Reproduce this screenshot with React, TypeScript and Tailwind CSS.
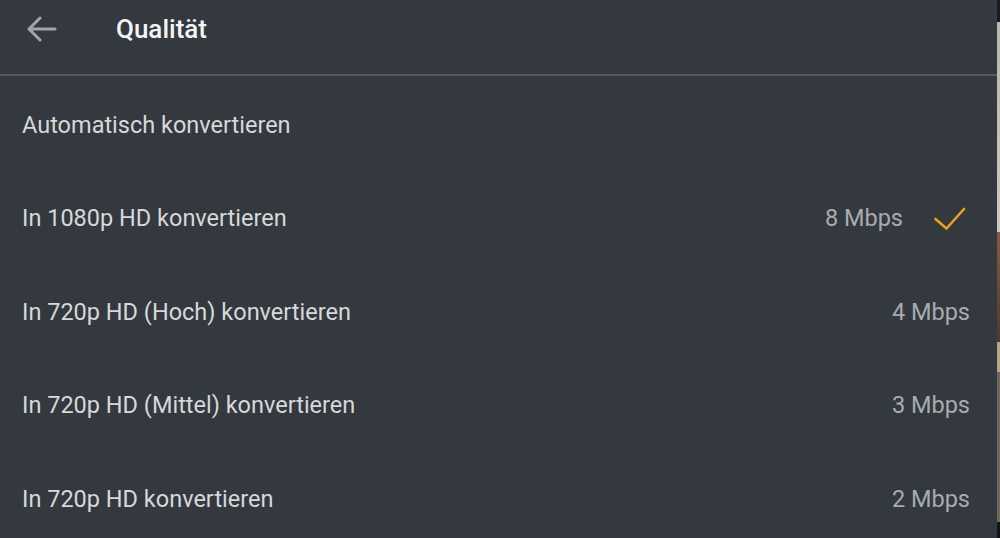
import React from 'react';

type Option = {
  label: string;
  rate?: string;
  selected?: boolean;
};

const options: Option[] = [
  { label: 'Automatisch konvertieren' },
  { label: 'In 1080p HD konvertieren', rate: '8 Mbps', selected: true },
  { label: 'In 720p HD (Hoch) konvertieren', rate: '4 Mbps' },
  { label: 'In 720p HD (Mittel) konvertieren', rate: '3 Mbps' },
  { label: 'In 720p HD konvertieren', rate: '2 Mbps' },
];

export default function App() {
  return (
    <div
      className="flex h-[538px] w-[1000px] overflow-hidden bg-[#34383f]"
      style={{ fontFamily: 'Roboto, "Noto Sans", sans-serif' }}
    >
      <div className="flex w-[997px] flex-col">
        {/* Header */}
        <header className="flex h-[76px] shrink-0 items-center border-b-2 border-[#575b61] pb-[16px]">
          <button type="button" className="ml-[27px] flex h-[30px] w-[30px] items-center justify-center">
            <svg width="30" height="26" viewBox="0 0 30 26" fill="none">
              <path
                d="M28 13H3M13 2L2 13l11 11"
                stroke="#a0a5aa"
                strokeWidth="3"
                strokeLinecap="round"
                strokeLinejoin="round"
              />
            </svg>
          </button>
          <h1 className="ml-[59px] text-[26px] font-medium text-[#f3f4f5]">Qualität</h1>
        </header>

        {/* Options */}
        <ul className="pt-[3px]">
          {options.map((opt) => (
            <li key={opt.label} className="flex h-[93.4px] items-center pl-[22px] pr-[27px]">
              <span className="flex-1 text-[23.5px] text-[#d6d8da]">{opt.label}</span>
              {opt.rate && (
                <span className="text-[23.5px] text-[#a8acb1]">{opt.rate}</span>
              )}
              {opt.selected && (
                <svg className="ml-[31px] mr-[4px]" width="32" height="24" viewBox="0 0 32 24" fill="none">
                  <path
                    d="M1.5 12l11 9.5L30 2"
                    stroke="#e6a31c"
                    strokeWidth="2.6"
                    strokeLinecap="round"
                    strokeLinejoin="round"
                  />
                </svg>
              )}
            </li>
          ))}
        </ul>
      </div>

      {/* sliver of the video behind the panel */}
      <div className="flex w-[3px] flex-col">
        <div className="h-[22px] bg-[#1b1b1b]" />
        <div className="h-[210px] bg-gradient-to-b from-[#b9b6ae] to-[#cfc8bc]" />
        <div className="h-[110px] bg-gradient-to-b from-[#8a5a40] to-[#4a3a30]" />
        <div className="h-[30px] bg-[#b9a680]" />
        <div className="h-[150px] bg-[#6e675c]" />
        <div className="flex-1 bg-[#151515]" />
      </div>
    </div>
  );
}
